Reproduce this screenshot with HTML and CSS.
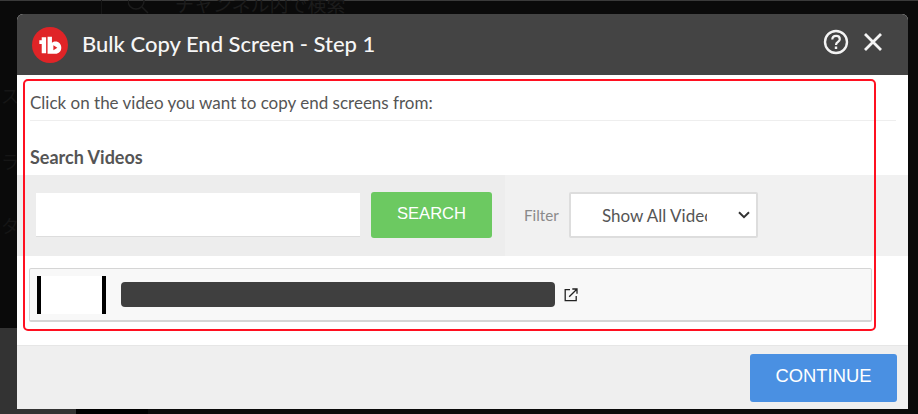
FILE: index.html
```html
<!DOCTYPE html>
<html lang="en">
<head>
<meta charset="utf-8">
<title>Bulk Copy End Screen</title>
<link rel="stylesheet" href="styles.css">
</head>
<body>
<div class="backdrop" aria-hidden="true">
  <span class="ghost-line"></span>
  <span class="ghost-rule"></span>
  <svg class="ghost-search" width="22" height="22" viewBox="0 0 22 22"><circle cx="8" cy="1" r="8" fill="none" stroke="#1c1c1c" stroke-width="1.5"/><path d="M14 7l6 6" stroke="#1c1c1c" stroke-width="1.5"/></svg>
  <span class="ghost-text">チャンネル内で検索</span>
  <span class="ghost-side ghost-a">ス</span>
  <span class="ghost-side ghost-b">ラ</span>
  <span class="ghost-side ghost-c">タ</span>
  <span class="ghost-bottom-left"></span>
  <span class="ghost-bottom-gap"></span>
</div>
<main class="modal">
  <header class="modal-head">
    <svg class="logo" width="36" height="36" viewBox="0 0 37 37">
      <circle cx="18.5" cy="18.5" r="18.500" fill="#e02427"/>
      <path d="M7.500 13.500h2.500V10.500h4.500V27h-4.500V17.500H7.500z" fill="#fff"/>
      <path d="M16 10h4.500v6.300c1-.9 2.300-1.300 3.600-1.300 3.500 0 6 2.700 6 6.200s-2.500 6.200-6 6.200H16z" fill="#fff"/>
      <path d="M22 18.800l4 2.500-4 2.500z" fill="#e02427"/>
    </svg>
    <h1 class="title">Bulk Copy End Screen - Step 1</h1>
    <div class="head-actions">
      <svg width="26" height="26" viewBox="0 0 26 26" fill="none" stroke="#f4f4f4" stroke-width="2.400">
        <circle cx="13" cy="13" r="11"/>
        <path d="M9.300 10.500c0-2.200 1.700-3.600 3.800-3.600s3.700 1.400 3.700 3.300c0 2.700-3.800 2.800-3.800 5.700" stroke-width="2.200"/>
        <path d="M13 17.600v2.400" stroke-width="2.400"/>
      </svg>
      <svg width="20" height="20" viewBox="0 0 20 20" fill="none" stroke="#f4f4f4" stroke-width="2.800"><path d="M2 2l16 16M18 2L2 18"/></svg>
    </div>
  </header>
  <section class="modal-body">
    <p class="intro">Click on the video you want to copy end screens from:</p>
    <h2 class="search-title">Search Videos</h2>
    <div class="search-band">
      <div class="search-left">
        <input class="search-input" type="text" aria-label="Search">
        <button class="btn btn-green" type="button">SEARCH</button>
      </div>
      <div class="search-right">
        <label class="filter-label" for="filter">Filter</label>
        <div class="filter-wrap">
          <select class="filter" id="filter"><option>Show All Videos</option></select>
          <svg class="chevron" width="12" height="8" viewBox="0 0 12 8" fill="none" stroke="#333" stroke-width="2"><path d="M1 1.200l5 5 5-5"/></svg>
        </div>
      </div>
    </div>
    <div class="video-row">
      <div class="thumb"></div>
      <div class="redacted"></div>
      <svg class="ext" width="14" height="14" viewBox="0 0 14 14" fill="none" stroke="#222" stroke-width="1.300">
        <path d="M6 1.700H1.200v11h11V8"/>
        <path d="M5.200 8.800L12.800 1.200M8.300 1h4.700v4.700"/>
      </svg>
    </div>
  </section>
  <footer class="modal-foot">
    <button class="btn btn-blue" type="button">CONTINUE</button>
  </footer>
  <div class="highlight" aria-hidden="true"></div>
</main>
</body>
</html>
```

FILE: styles.css
```css
* { box-sizing: border-box; }
html, body { margin: 0; height: 100%; }
body {
  position: relative;
  width: 918px;
  height: 414px;
  overflow: hidden;
  background: #0a0a0a;
  padding: 14px 0 0 17px;
  font-family: "Lato", "Liberation Sans", sans-serif;
}
.backdrop { position: absolute; inset: 0; }
.ghost-line { position: absolute; left: 0; top: 0; width: 100%; height: 1px; background: #3a3a3a; }
.ghost-rule { position: absolute; left: 101px; top: 0; width: 1px; height: 14px; background: #161616; }
.ghost-search { position: absolute; left: 128px; top: 0; }
.ghost-text {
  position: absolute;
  left: 175px;
  top: -10px;
  font: 19px "Noto Sans CJK JP", sans-serif;
  color: #1c1c1c;
}
.ghost-side { position: absolute; left: 1px; font: 18px "Noto Sans CJK JP", sans-serif; color: #161616; }
.ghost-a { top: 82px; }
.ghost-b { top: 148px; }
.ghost-c { top: 212px; }
.ghost-bottom-left { position: absolute; left: 0; top: 328px; width: 76px; height: 86px; background: #333; }
.ghost-bottom-gap { position: absolute; left: 76px; top: 409px; width: 72px; height: 5px; background: #000; }

.modal {
  position: relative;
  width: 891px;
  height: 395px;
  background: #fff;
  border-radius: 6px 6px 0 0;
  display: flex;
  flex-direction: column;
  overflow: hidden;
}
.modal-head {
  height: 61px;
  flex: none;
  background: #444;
  display: flex;
  align-items: center;
  padding: 0 25px 0 15px;
  color: #f6f6f6;
}
.logo { flex: none; }
.title { margin: 0 0 2px 14px; font-size: 22px; font-weight: 500; flex: 1; }
.head-actions { display: flex; align-items: center; gap: 14px; margin-bottom: 6px; }

.modal-body { flex: 1; display: flex; flex-direction: column; min-height: 0; }
.intro {
  margin: 0 12px 0 13px;
  height: 46px;
  padding-top: 18px;
  font-size: 17px;
  line-height: 20px;
  color: #555;
  border-bottom: 1px solid #eee;
}
.search-title {
  margin: 0;
  padding: 26px 0 0 13px;
  height: 54px;
  font-size: 18px;
  line-height: 20px;
  font-weight: 700;
  color: #555;
}
.search-band { height: 81px; display: flex; flex: none; }
.search-left {
  width: 488px;
  background: #ededed;
  display: flex;
  align-items: center;
  padding: 0 13px 1px 19px;
  gap: 11px;
}
.search-input {
  width: 324px;
  height: 44px;
  border: 0;
  border-bottom: 1px solid #ddd;
  background: #fff;
}
.btn {
  border: 0;
  border-radius: 3px;
  color: #fff;
  font-family: "Liberation Sans", sans-serif;
}
.btn-green { width: 121px; height: 46px; background: #6cc961; font-size: 16.600px; padding-bottom: 4px; }
.search-right {
  flex: 1;
  background: #f1f1f1;
  display: flex;
  align-items: center;
  padding: 0 0 1px 19px;
}
.filter-label { font-size: 15.200px; color: #8a8a8a; width: 45px; }
.filter-wrap { position: relative; width: 189px; height: 46px; }
.filter {
  appearance: none;
  width: 100%;
  height: 100%;
  padding: 0 49px 0 31px;
  border: 2px solid #ddd;
  border-radius: 2px;
  background: #fff;
  color: #555;
  font: 17px "Lato", sans-serif;
}
.chevron { position: absolute; left: 169px; top: 19px; pointer-events: none; }
.video-row {
  margin: 12px 36px 0 12px;
  height: 54px;
  flex: none;
  display: flex;
  align-items: center;
  padding-left: 7px;
  background: #f8f8f8;
  border: 2px solid #d5d5d5;
  border-width: 1px 1px 2px 1px;
  border-radius: 2px;
}
.thumb {
  width: 69px;
  height: 38px;
  background: #fff;
  border-left: 4px solid #000;
  border-right: 4px solid #000;
}
.redacted {
  width: 434px;
  height: 25px;
  margin-left: 15px;
  background: #3f3f3f;
  border-radius: 4px;
}
.ext { margin-left: 9px; }
.modal-foot {
  height: 64px;
  flex: none;
  background: #efefef;
  border-top: 1px solid #e6e6e6;
  display: flex;
  justify-content: flex-end;
  align-items: center;
  padding-right: 11px;
}
.btn-blue { width: 147px; height: 48px; background: #4a90e2; font-size: 18.400px; padding-bottom: 4px; }
.highlight {
  position: absolute;
  left: 6px;
  top: 65px;
  width: 853px;
  height: 252px;
  border: 2px solid #ff1020;
  border-radius: 5px;
  pointer-events: none;
}
```
